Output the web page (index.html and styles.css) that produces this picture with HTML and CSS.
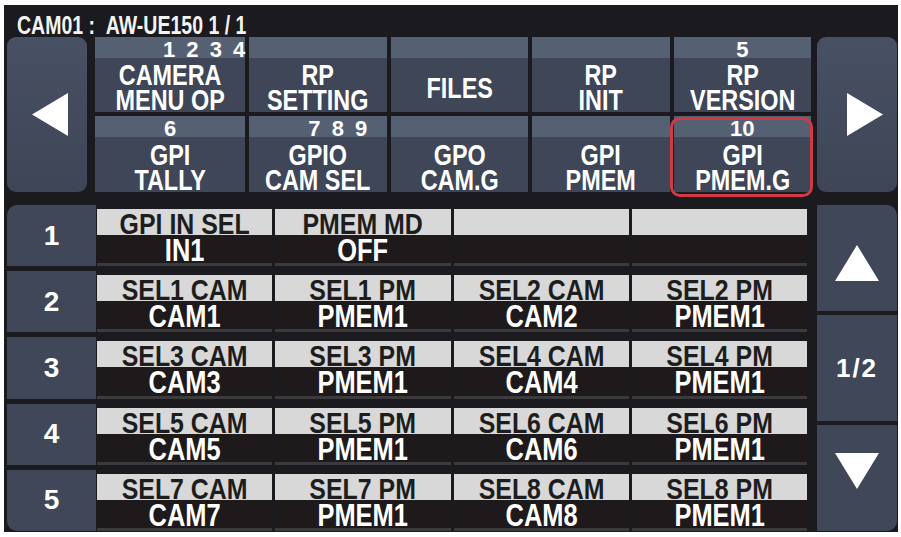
FILE: index.html
```html
<!DOCTYPE html>
<html lang="en">

<head>
  <meta charset="utf-8">
  <title>CAM01 GPI Menu</title>
  <link rel="stylesheet" href="styles.css">
</head>

<body>
  <div class="panel">
    <div class="title"><span>CAM01 :&nbsp;&nbsp;AW-UE150 1 / 1</span></div>

    <div class="top">
      <div class="arrow arrow-left">
        <svg width="36" height="43" viewBox="0 0 36 43"><polygon points="0,21.5 36,0 36,43" fill="#fff"/></svg>
      </div>
      <div class="menu">
        <div class="key">
          <div class="num num-a">1 2 3 4</div>
          <div class="lbl"><span>CAMERA</span><span>MENU OP</span></div>
        </div>
        <div class="key">
          <div class="num"></div>
          <div class="lbl"><span>RP</span><span>SETTING</span></div>
        </div>
        <div class="key">
          <div class="num"></div>
          <div class="lbl"><span>FILES</span></div>
        </div>
        <div class="key">
          <div class="num"></div>
          <div class="lbl"><span>RP</span><span>INIT</span></div>
        </div>
        <div class="key">
          <div class="num">5</div>
          <div class="lbl"><span>RP</span><span>VERSION</span></div>
        </div>
        <div class="key">
          <div class="num">6</div>
          <div class="lbl"><span>GPI</span><span>TALLY</span></div>
        </div>
        <div class="key">
          <div class="num num-b">7 8 9</div>
          <div class="lbl"><span>GPIO</span><span>CAM SEL</span></div>
        </div>
        <div class="key">
          <div class="num"></div>
          <div class="lbl"><span>GPO</span><span>CAM.G</span></div>
        </div>
        <div class="key">
          <div class="num"></div>
          <div class="lbl"><span>GPI</span><span>PMEM</span></div>
        </div>
        <div class="key key-active">
          <div class="num">10</div>
          <div class="lbl"><span>GPI</span><span>PMEM.G</span></div>
        </div>
      </div>
      <div class="arrow arrow-right">
        <svg width="36" height="43" viewBox="0 0 36 43"><polygon points="36,21.5 0,0 0,43" fill="#fff"/></svg>
      </div>
    </div>

    <div class="bottom">
      <div class="rows">
        <div class="row">
          <div class="idx idx-first">1</div>
          <div class="cells">
            <div class="cell"><div class="k"><span>GPI IN SEL</span></div><div class="v"><span>IN1</span></div></div>
            <div class="cell"><div class="k"><span>PMEM MD</span></div><div class="v"><span>OFF</span></div></div>
            <div class="cell"><div class="k"></div><div class="v"></div></div>
            <div class="cell"><div class="k"></div><div class="v"></div></div>
          </div>
        </div>
        <div class="row">
          <div class="idx">2</div>
          <div class="cells">
            <div class="cell"><div class="k"><span>SEL1 CAM</span></div><div class="v"><span>CAM1</span></div></div>
            <div class="cell"><div class="k"><span>SEL1 PM</span></div><div class="v"><span>PMEM1</span></div></div>
            <div class="cell"><div class="k"><span>SEL2 CAM</span></div><div class="v"><span>CAM2</span></div></div>
            <div class="cell"><div class="k"><span>SEL2 PM</span></div><div class="v"><span>PMEM1</span></div></div>
          </div>
        </div>
        <div class="row">
          <div class="idx">3</div>
          <div class="cells">
            <div class="cell"><div class="k"><span>SEL3 CAM</span></div><div class="v"><span>CAM3</span></div></div>
            <div class="cell"><div class="k"><span>SEL3 PM</span></div><div class="v"><span>PMEM1</span></div></div>
            <div class="cell"><div class="k"><span>SEL4 CAM</span></div><div class="v"><span>CAM4</span></div></div>
            <div class="cell"><div class="k"><span>SEL4 PM</span></div><div class="v"><span>PMEM1</span></div></div>
          </div>
        </div>
        <div class="row">
          <div class="idx">4</div>
          <div class="cells">
            <div class="cell"><div class="k"><span>SEL5 CAM</span></div><div class="v"><span>CAM5</span></div></div>
            <div class="cell"><div class="k"><span>SEL5 PM</span></div><div class="v"><span>PMEM1</span></div></div>
            <div class="cell"><div class="k"><span>SEL6 CAM</span></div><div class="v"><span>CAM6</span></div></div>
            <div class="cell"><div class="k"><span>SEL6 PM</span></div><div class="v"><span>PMEM1</span></div></div>
          </div>
        </div>
        <div class="row">
          <div class="idx idx-last">5</div>
          <div class="cells">
            <div class="cell"><div class="k"><span>SEL7 CAM</span></div><div class="v"><span>CAM7</span></div></div>
            <div class="cell"><div class="k"><span>SEL7 PM</span></div><div class="v"><span>PMEM1</span></div></div>
            <div class="cell"><div class="k"><span>SEL8 CAM</span></div><div class="v"><span>CAM8</span></div></div>
            <div class="cell"><div class="k"><span>SEL8 PM</span></div><div class="v"><span>PMEM1</span></div></div>
          </div>
        </div>
      </div>

      <div class="side">
        <div class="side-btn side-up">
          <svg width="44" height="36" viewBox="0 0 44 36"><polygon points="22,0 44,36 0,36" fill="#fff"/></svg>
        </div>
        <div class="side-btn side-page">1/2</div>
        <div class="side-btn side-down">
          <svg width="44" height="36" viewBox="0 0 44 36"><polygon points="0,0 44,0 22,36" fill="#fff"/></svg>
        </div>
      </div>
    </div>
  </div>
</body>

</html>
```

FILE: styles.css
```css
* {
  box-sizing: border-box;
}

body {
  margin: 0;
  background-color: #fff;
  font-family: 'Liberation Sans', Arial, sans-serif;
  font-weight: bold;
}

.panel {
  margin: 5px 0 0 4px;
  width: 894px;
  height: 527px;
  padding: 0 1px 1px 3px;
  background-color: #1b1a1e;
  display: flex;
  flex-direction: column;
}

.title {
  height: 32px;
  padding: 7px 0 0 10px;
  font-size: 25px;
  line-height: 26px;
  color: #f3f3f3;
}

.title span {
  display: inline-block;
  white-space: nowrap;
  transform: scaleX(.78);
  transform-origin: left center;
}

/* top menu */

.top {
  display: flex;
  height: 155px;
}

.arrow {
  width: 80px;
  border-radius: 9px;
  background: linear-gradient(#485063, #3d4557);
  display: flex;
  align-items: center;
  justify-content: center;
}

.arrow-left svg {
  margin-left: 6px;
}

.arrow-right svg {
  margin-left: 16px;
}

.menu {
  flex: 1;
  margin: 0 6px 0 8px;
  display: grid;
  grid-template-columns: repeat(5, 1fr);
  grid-template-rows: 75px 76px;
  gap: 4px;
}

.key {
  display: flex;
  flex-direction: column;
  background: linear-gradient(#566073 0, #566073 21px, #3e4658 21px);
  color: #fff;
}

.key-active {
  position: relative;
}

.key-active::after {
  content: "";
  position: absolute;
  top: 1px;
  left: -4px;
  right: -2px;
  bottom: -5px;
  border: 3px solid #cf3a44;
  border-radius: 10px;
}

.num {
  height: 25px;
  font-size: 22px;
  line-height: 25px;
  text-align: center;
  white-space: pre;
}

.num-a {
  text-align: left;
  padding-left: 68px;
  word-spacing: 5px;
}

.num-b {
  text-align: left;
  padding-left: 59px;
  word-spacing: 5px;
}

.lbl {
  flex: 1;
  display: flex;
  flex-direction: column;
  justify-content: center;
  font-size: 30px;
  line-height: 25px;
}

.lbl span {
  display: block;
  text-align: center;
  white-space: nowrap;
  transform: scaleX(.78);
}

/* parameter rows */

.bottom {
  flex: 1;
  margin-top: 13px;
  display: flex;
  gap: 10px;
}

.rows {
  flex: 1;
  display: grid;
  grid-template-rows: repeat(5, 1fr);
  row-gap: 5px;
}

.row {
  display: flex;
  gap: 1px;
}

.idx {
  width: 89px;
  background-color: #3f4759;
  color: #fff;
  font-size: 28px;
  display: flex;
  align-items: center;
  justify-content: center;
}

.idx-first {
  border-top-left-radius: 10px;
}

.idx-last {
  border-bottom-left-radius: 10px;
}

.cells {
  flex: 1;
  display: grid;
  grid-template-columns: repeat(4, 1fr);
  column-gap: 3px;
}

.cell {
  padding-top: 4px;
  border-bottom: 3px solid #3b3b3e;
}

.k {
  height: 26px;
  background-color: #d8d8d8;
  color: #1d1d1d;
  font-size: 30px;
  line-height: 30px;
  text-align: center;
}

.v {
  height: 28px;
  background-color: #1e1a1b;
  color: #fff;
  font-size: 31px;
  line-height: 32px;
  text-align: center;
}

.k span,
.v span {
  display: block;
  white-space: nowrap;
}

.k span {
  transform: scaleX(.83);
}

.v span {
  transform: scaleX(.82);
}

/* side paging */

.side {
  width: 80px;
  display: flex;
  flex-direction: column;
  gap: 4px;
}

.side-btn {
  flex: 1;
  background-color: #3f4759;
  display: flex;
  align-items: center;
  justify-content: center;
  color: #fff;
}

.side-up {
  border-top-right-radius: 10px;
}

.side-up svg {
  margin-top: 10px;
}

.side-down {
  border-bottom-right-radius: 10px;
}

.side-down svg {
  margin-bottom: 14px;
}

.side-page {
  font-size: 26px;
  letter-spacing: 2px;
}
```
